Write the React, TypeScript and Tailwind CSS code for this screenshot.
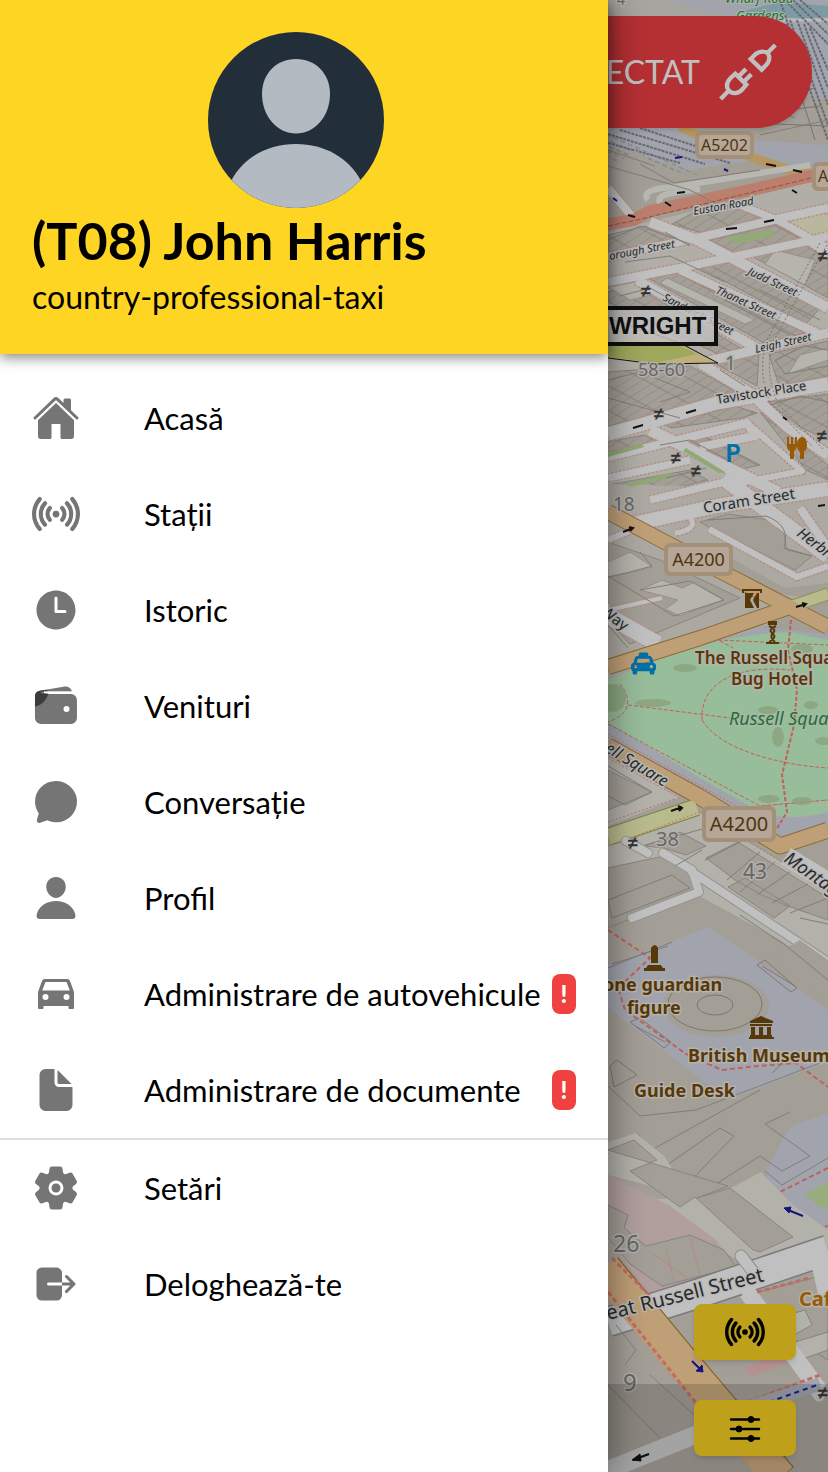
import type { ReactNode } from "react";
import {
  IoHome,
  IoRadio,
  IoTime,
  IoWallet,
  IoChatbubble,
  IoPerson,
  IoDocument,
  IoSettings,
  IoLogOut,
} from "react-icons/io5";
import { FaTaxi } from "react-icons/fa";

function CarIcon() {
  return (
    <svg viewBox="0 -1 48 48" className="size-12" fill="currentColor" aria-hidden="true">
      <path
        fillRule="evenodd"
        d="M13 8H35C36.5 8 37.500 8.800 38 10L42 21V36.500C42 37.500 41.500 38 40.500 38H38C37 38 36.500 37.500 36.500 36.500V35H11.500V36.500C11.500 37.500 11 38 10 38H7.500C6.500 38 6 37.500 6 36.500V21L10 10C10.500 8.800 11.500 8 13 8ZM13.500 11L10.200 19.500H37.800L34.500 11ZM13.500 23A3 3 0 1 0 13.500 29A3 3 0 1 0 13.500 23ZM34.500 23A3 3 0 1 0 34.500 29A3 3 0 1 0 34.500 23Z"
      />
    </svg>
  );
}

function WalletIcon() {
  return (
    <svg viewBox="0 0 48 48" className="size-12" fill="currentColor" aria-hidden="true">
      <IoWallet x={0} y={0} size={48} />
      <path d="M3 24.500V13.500C3 11 5.500 9 8 8.700L15.500 7.700V9.400H10.500C8.500 9.400 8 11.500 10.500 11.500H16.500C14 19 9 23.500 3 24.500Z" fill="#3c3c3c" />
      <path d="M12 10.300H40" stroke="#fff" strokeWidth="1.800" />
    </svg>
  );
}

function SlidersIcon() {
  return (
    <svg viewBox="0 0 40 40" className="size-10" fill="currentColor" stroke="currentColor" aria-hidden="true">
      <path d="M6 11.500H34M6 21H34M6 30.500H34" strokeWidth="2.500" strokeLinecap="round" />
      <circle cx="26" cy="11.500" r="3" />
      <circle cx="14" cy="21" r="3" />
      <circle cx="26" cy="30.500" r="3" />
    </svg>
  );
}

function UnpluggedIcon() {
  return (
    <svg viewBox="6 6 192 192" className="size-16 shrink-0" fill="none" stroke="currentColor" strokeWidth="13" aria-hidden="true">
      <path d="M110 63L143 95L157 80C171 65 168 42 149 41C138 40 131 43 125 48Z" />
      <path d="M158 47L184 21" />
      <path d="M64 107L97 140L85 154C72 169 52 168 44 157C35 145 38 132 50 120Z" />
      <path d="M46 156L20 183M75 114L96 93M91 130L112 109" />
    </svg>
  );
}

function Avatar() {
  return (
    <svg viewBox="0 0 176 176" className="mr-4 size-44 self-center" role="img" aria-label="Avatar">
      <clipPath id="avatar-clip">
        <circle cx="88" cy="88" r="88" />
      </clipPath>
      <g clipPath="url(#avatar-clip)">
        <rect width="176" height="176" fill="#222e3a" />
        <path d="M88 27C108 27 122 42 122 62C122 84 107 101.500 88 101.500C69 101.500 54 84 54 62C54 42 68 27 88 27Z" fill="#b3bac1" />
        <path d="M88 112C117 112 141 126 153 149V176H23V149C35 126 59 112 88 112Z" fill="#b3bac1" />
      </g>
    </svg>
  );
}

const primary: { label: string; icon: ReactNode; alert?: boolean }[] = [
  { label: "Acasă", icon: <IoHome className="size-12" /> },
  { label: "Stații", icon: <IoRadio className="size-12" /> },
  { label: "Istoric", icon: <IoTime className="size-12" /> },
  { label: "Venituri", icon: <WalletIcon /> },
  { label: "Conversație", icon: <IoChatbubble className="size-12" /> },
  { label: "Profil", icon: <IoPerson className="size-12" /> },
  { label: "Administrare de autovehicule", icon: <CarIcon />, alert: true },
  { label: "Administrare de documente", icon: <IoDocument className="size-12" />, alert: true },
];

const secondary: { label: string; icon: ReactNode; alert?: boolean }[] = [
  { label: "Setări", icon: <IoSettings className="size-12" /> },
  { label: "Deloghează-te", icon: <IoLogOut className="size-12" /> },
];

function MenuItem({ label, icon, alert }: { label: string; icon: ReactNode; alert?: boolean }) {
  return (
    <li>
      <a href="#" className="flex h-24 items-center px-8 text-[31px] leading-10 text-black">
        <span className="mr-16 shrink-0 text-[#757575]">{icon}</span>
        <span className="min-w-0 flex-1 whitespace-nowrap">{label}</span>
        {alert && (
          <span className="flex h-10 w-6 shrink-0 items-center justify-center rounded-lg bg-[#f04141] text-2xl font-black text-white">
            !
          </span>
        )}
      </a>
    </li>
  );
}

function Shield({ x, y, w, h, size, children }: { x: number; y: number; w: number; h: number; size: number; children: string }) {
  return (
    <g>
      <rect x={x} y={y} width={w} height={h} rx="6" fill="#a49077" />
      <rect x={x + 4} y={y + 4} width={w - 8} height={h - 8} rx="3" fill="#b5a697" />
      <text x={x + w / 2} y={y + h / 2 + size * 0.36} fontSize={size} fill="#4d3610" textAnchor="middle">
        {children}
      </text>
    </g>
  );
}

const whiteRoads: [string, number][] = [
  ["M608 188L634 219", 8],
  ["M608 257L697 238L777 219L828 208", 8],
  ["M650 222L697 240L828 308", 10],
  ["M740 205L777 220L828 248", 7],
  ["M608 282L680 268L813 240L828 236", 8],
  ["M808 240L828 254", 8],
  ["M680 270L817 333", 8],
  ["M637 280L760 350", 9],
  ["M700 363L760 349L828 333", 9],
  ["M608 434L717 403L828 384", 13],
  ["M700 363L750 393L787 427L828 455", 10],
  ["M650 430L778 492", 11],
  ["M608 457L747 423L755 436L700 447", 8],
  ["M608 478L690 460", 7],
  ["M747 423L802 471L725 486", 6],
  ["M650 500L741 478", 7],
  ["M633 524L717 506L828 489", 14],
  ["M723 478L828 556", 15],
  ["M800 508L828 548", 8],
  ["M608 540L634 529", 6],
  ["M690 518C698 526 686 532 675 533", 5],
  ["M709 529L797 577L828 566", 6],
  ["M608 610L662 598", 4],
  ["M608 616L658 644", 16],
];

const darkLines =
  "M608 166L690 190L720 206M640 164L674 183L760 170M608 150L655 166M735 95L795 118M760 135L828 120M608 240L640 226L690 244M665 232L690 246M625 262L670 256L725 282M620 296L650 288L690 310M640 315L690 345M725 300L790 335M760 290L820 320M608 380L640 372L690 392L660 402M608 398L680 418M720 370L745 386M775 360L805 346L828 350M775 360L785 374L828 366M770 405L800 396L828 402M660 445L690 440L728 460M666 478L706 468M708 520L766 516C790 525 786 540 784 548L812 556M608 577L630 572L652 566L640 552M640 590L690 581L724 600L674 616L608 576M608 625L628 648M608 766L652 792L625 805L608 796M645 845L720 824M675 866L702 850M705 860L740 842M727 880L760 852M740 892L775 862M757 895L790 872M772 903L808 884M790 913L828 898M800 918L828 924M608 900L672 875L690 888L612 918L608 900M740 915L785 945L828 980M608 1086L640 1116L696 1110L828 1060M608 1142L637 1158L760 1090M650 1177L720 1128L734 1136L676 1196L650 1177M697 1196L760 1156L782 1171L810 1156L765 1124L790 1112M765 1171L782 1185L828 1158M637 1133L670 1170";

function MapView() {
  return (
    <svg
      viewBox="608 0 220 1472"
      preserveAspectRatio="xMinYMin slice"
      className="absolute inset-0 size-full font-['Noto_Sans',sans-serif]"
      aria-label="Map"
    >
      <defs>
        <pattern id="terrace" width="9" height="22" patternUnits="userSpaceOnUse" patternTransform="rotate(28) skewX(-30)">
          <rect width="9" height="22" fill="#a39e96" />
          <path d="M0 0V22M0 11H9" stroke="#857f79" strokeWidth="1" />
        </pattern>
        <pattern id="rails" width="8" height="5" patternUnits="userSpaceOnUse" patternTransform="rotate(24)">
          <path d="M0 1H5" stroke="#777881" strokeWidth="1" />
        </pattern>
      </defs>

      <rect x="608" width="220" height="1472" fill="#a39e96" />

      {/* Rail yard */}
      <path d="M608 0H828V174L755 160L690 170L608 146Z" fill="#a2a4ad" />
      <path d="M608 0H670L740 22L608 24Z" fill="#a7a59f" />
      <path d="M740 12L780 2L828 6V17L800 19Z" fill="#7c9ba5" />
      <path d="M608 20H828" stroke="#bcbcbc" strokeWidth="3" />
      <path d="M608 132L700 176L608 160Z" fill="url(#rails)" />
      <path d="M690 128H770L806 95L828 100V145L750 140Z" fill="#a39e96" />
      <g stroke="#696a71" strokeWidth="2" strokeDasharray="3 1" fill="none">
        <path d="M785 0L828 44M793 0L828 34M800 0L828 24M790 20L828 125M797 20L828 105M804 24L828 88M810 28L828 70M786 24L828 140M608 134L705 164M620 130L730 163M640 128L720 154M608 143L680 163M780 0L800 60" />
      </g>
      <path d="M765 100L815 88M770 112L820 106M775 124L828 126M790 60L815 140" stroke="#77736e" fill="none" />
      <path d="M680 127L730 150L790 170L828 178" stroke="#b7965f" strokeWidth="9" fill="none" />
      <path d="M608 172L635 150L690 190L650 205L608 214Z" fill="#a39e96" />

      {/* City blocks */}
      <path d="M608 232L828 178V530L608 500Z" fill="#b0aea7" />
      <g fill="url(#terrace)" stroke="#8a857e" strokeWidth="1">
        <path d="M695 212L735 204L770 217L703 233L672 224Z" />
        <path d="M608 235L645 226L688 241L608 254Z" />
        <path d="M710 240L775 225L808 238L738 254Z" />
        <path d="M690 263L732 257L822 306L806 324Z" />
        <path d="M648 278L676 273L806 333L764 343Z" />
        <path d="M608 292L633 285L744 350L718 354L608 302Z" />
        <path d="M748 254L802 243L828 260V298Z" />
        <path d="M608 372L690 366L740 394L702 403L608 426Z" />
        <path d="M714 363L759 354L757 386Z" />
        <path d="M769 354L828 341V376L779 386Z" />
        <path d="M664 424L735 406L757 413L742 418L671 428Z" />
        <path d="M768 402L828 394V440L800 427Z" />
        <path d="M760 412L828 465V480L806 470Z" />
        <path d="M670 440L706 437L760 465L728 472Z" />
        <path d="M608 442L644 435L658 442L608 452Z" />
        <path d="M608 485L690 470L708 480L644 496Z" />
      </g>
      <path d="M667 278L755 320L745 324L660 283ZM775 250L815 260L805 285L765 264ZM800 355L828 348V360L788 374ZM608 287L635 282L655 294L630 300Z" fill="#b5b4ad" stroke="#96928b" strokeWidth="1" />
      <path d="M785 225L815 212L828 216V240L806 236Z" fill="#b9b79d" />
      <path d="M730 240L728 236L770 230L775 236L737 244Z" fill="#94a878" />

      {/* Bloomsbury blocks */}
      <path d="M608 484L828 490V600L608 690Z" fill="#aca9a2" />
      <path d="M608 542L660 560L740 598L630 644L608 620Z" fill="#a39e96" stroke="#8a857e" />
      <path d="M700 522L728 514L770 520L784 534L787 550L812 556L795 570L707 526Z" fill="#a39e96" stroke="#8a857e" />
      <path d="M707 545L785 588L828 583V600L780 594L700 555Z" fill="#a39e96" />
      <path d="M608 562L630 552L653 567L608 578ZM640 590L662 580L682 588L695 582L724 600L680 616L665 609L678 600Z" fill="#b5b4ad" stroke="#95918a" />

      {/* Streets */}
      <g fill="none" strokeLinejoin="round">
        {whiteRoads.map(([d, w]) => (
          <path key={"edge" + d} d={d} stroke="#b88c86" strokeWidth={w + 3} strokeDasharray="2 2" />
        ))}
        {whiteRoads.map(([d, w]) => (
          <path key={d} d={d} stroke="#c0c0c0" strokeWidth={w} />
        ))}
      </g>
      <path d="M608 452L642 444L644 447L608 457ZM626 484L670 473L674 477L630 487ZM686 448L725 472L719 473L683 451Z" fill="#90a875" />
      <path d="M608 224L634 220L650 211L750 190L828 172" stroke="#bb7f6e" strokeWidth="12" fill="none" />
      <path d="M608 226L637 220L828 174" stroke="#9c4d41" strokeWidth="1" strokeDasharray="5 2" fill="none" />
      <path d="M648 200C640 190 660 188 680 186L810 165M660 203C656 194 670 193 700 189" stroke="#b7b8b2" strokeWidth="6" fill="none" />
      <path d="M820 243L790 297L767 340Q757 370 770 403L813 447M827 245L795 302L773 342Q764 372 778 404L824 450" stroke="#77736e" strokeWidth="1" strokeDasharray="2 2" fill="none" />

      {/* Highlighted zone */}
      <path d="M608 318L680 343L718 363L655 364L608 358Z" fill="#beb078" stroke="#111" strokeWidth="1" />
      <path d="M608 346L670 341L697 354L655 363L608 357Z" fill="#9ea95c" />

      {/* Russell Square */}
      <path d="M608 690L700 648L760 627L828 634V840L780 840L608 736Z" fill="#a2a4ad" />
      <path d="M608 680C670 655 720 634 790 632L828 640V812Q790 822 760 812L700 778L608 722Z" fill="#98bd9b" />
      <g stroke="#c85c58" strokeWidth="1" strokeDasharray="4 2" fill="none">
        <path d="M608 670L718 640L828 645M620 684Q640 710 608 722M628 705L730 718M702 720C700 680 740 665 790 670M702 720C720 750 780 765 828 768M608 724L760 806L828 800M720 641L733 648" />
        <path d="M791 620L788 650L797 690L794 725L782 775L787 812L776 830" strokeWidth="2" />
      </g>
      <g fill="#8da783">
        <ellipse cx="613" cy="698" rx="13" ry="14" />
        <ellipse cx="653" cy="703" rx="18" ry="4" />
        <ellipse cx="685" cy="668" rx="12" ry="4" />
        <ellipse cx="778" cy="737" rx="6" ry="10" />
        <ellipse cx="823" cy="741" rx="8" ry="4" />
        <ellipse cx="811" cy="705" rx="7" ry="4" />
        <ellipse cx="802" cy="649" rx="11" ry="5" />
        <ellipse cx="769" cy="799" rx="11" ry="4" />
        <ellipse cx="802" cy="801" rx="10" ry="4" />
        <ellipse cx="768" cy="710" rx="10" ry="4" />
      </g>

      {/* Blocks south of the square */}
      <path d="M608 755L680 797L608 826ZM700 813L828 890V1010L608 890V845Z" fill="#b2b1aa" />
      <path d="M608 870L670 876L694 893L780 940L828 972V1010L709 940L608 965Z" fill="#a39e96" />
      <path d="M608 770L652 792L608 810ZM645 846L680 832L706 846L686 855L664 848ZM706 858L738 842L828 898V920L785 905L762 895L735 880ZM728 887L745 878L790 906L774 918ZM608 868L664 856L692 872L696 892L608 928Z" fill="#a39e96" stroke="#8a857e" />
      <g fill="none" strokeLinejoin="round">
        <path d="M608 512L720 571L828 627" stroke="#8a6d3a" strokeWidth="16" />
        <path d="M608 667L700 638L787 608" stroke="#8a6d3a" strokeWidth="16" />
        <path d="M787 608L828 594" stroke="#8c9157" strokeWidth="13" />
        <path d="M787 608L828 594" stroke="#b9bb8d" strokeWidth="11" />
        <path d="M608 746L700 797L780 846L828 830" stroke="#8a6d3a" strokeWidth="17" />
        <path d="M608 837L697 807" stroke="#7b8243" strokeWidth="18" />
        <path d="M608 837L697 807" stroke="#b9bb8d" strokeWidth="16" />
        <path d="M608 512L720 571L828 627M608 667L700 638L787 608" stroke="#bf9f76" strokeWidth="14" />
        <path d="M608 746L700 797L780 846L828 830" stroke="#bf9f76" strokeWidth="15" />
        <path d="M786 856L828 882" stroke="#c0c0c0" strokeWidth="19" />
        <path d="M608 758L680 798M608 822L675 799M608 846L700 812L828 890M608 734L740 808L828 800" stroke="#c77069" strokeWidth="1" strokeDasharray="2 2" />
        <path d="M663 853L692 870L699 892L632 918M692 872L780 930L828 962M626 841L648 853" stroke="#939590" strokeWidth="10" strokeLinecap="round" />
        <path d="M663 853L692 870L699 892L632 918M692 872L780 930L828 962M626 841L648 853" stroke="#c0c0c0" strokeWidth="8" strokeLinecap="round" />
      </g>

      {/* British Museum */}
      <path d="M608 965L709 927L828 1010V1062L728 1100L608 1008Z" fill="#a2a4ad" />
      <path d="M755 966L770 960L828 1003V960L800 940Z" fill="#a39e96" />
      <ellipse cx="716" cy="1006" rx="53" ry="31" fill="#a39e96" />
      <path d="M668 1004A47 27 0 1 0 762 1004A47 27 0 1 0 668 1004M697 1005A18 10 0 1 0 733 1005A18 10 0 1 0 697 1005" fill="none" stroke="#7b7670" />
      <path d="M608 930L650 958L618 988L625 1010L686 1054L722 1070L758 1066L796 1063L828 1087" fill="none" stroke="#bd625a" strokeWidth="2" strokeDasharray="5 3" />
      <path d="M608 968L672 942M612 964L668 946M757 965L765 960L797 988L791 992ZM762 966L795 986M630 1022L640 1018L671 1042L664 1048ZM635 1026L665 1042M772 1073L784 1062L810 1053M610 1066L617 1060L637 1075L614 1087Z" fill="none" stroke="#7e7973" />
      <path d="M765 1172L790 1127L828 1113V1250L782 1215Z" fill="#a2a4ad" />
      <path d="M804 1194L828 1182V1208L820 1207Z" fill="#98ac7e" />
      <path d="M828 1168L770 1197L820 1227L828 1226" fill="none" stroke="#bd625a" strokeWidth="2" strokeDasharray="5 3" />
      <path d={darkLines} fill="none" stroke="#827d77" strokeWidth="1" />
      <path d="M608 1142L636 1133L664 1156L690 1196L608 1175ZM733 1187L761 1172L793 1205L828 1230V1262L750 1268L640 1200L700 1197Z" fill="#b2b1aa" />
      <path d="M608 1150L634 1140L657 1160L630 1171L680 1207L695 1197L753 1250L760 1252L793 1237L730 1188L697 1198L728 1186Z" fill="#a39e96" stroke="#8a857e" />

      {/* Great Russell Street */}
      <path d="M608 1175L670 1206L716 1240L737 1270L652 1296L608 1240Z" fill="#b19f9e" />
      <path d="M608 1205L628 1215L624 1228L646 1246L690 1235L724 1250L736 1267L662 1286L630 1264L608 1238Z" fill="#a39e96" stroke="#88827d" />
      <path d="M650 1252L690 1280M666 1250L675 1284M690 1238L700 1276" stroke="#b58a88" fill="none" />
      <path d="M608 1325L700 1297L745 1340V1472H608Z" fill="#a39e96" />
      <path d="M755 1293L828 1274V1360L795 1340Z" fill="#a39e96" stroke="#88827d" />
      <path d="M770 1320L805 1310L812 1325L785 1340M785 1345L828 1332V1350L800 1360Z" fill="#b2b1aa" stroke="#88827d" />
      <path d="M743 1368L790 1350L800 1358L752 1376Z" fill="#b5908f" />
      <g fill="none">
        <path d="M608 1322L700 1293L828 1250" stroke="#7a7b7c" strokeWidth="31" />
        <path d="M608 1322L700 1293L828 1250" stroke="#c0c0c0" strokeWidth="28" />
        <path d="M741 1256L755 1274" stroke="#8d8e8f" strokeWidth="13" strokeLinecap="round" />
        <path d="M741 1256L757 1277M747 1292L819 1396" stroke="#c0c0c0" strokeWidth="11" strokeLinecap="round" />
        <path d="M747 1292L819 1390M819 1260L828 1300" stroke="#c0c0c0" strokeWidth="17" />
        <path d="M608 1470L700 1433" stroke="#c0c0c0" strokeWidth="18" />
        <path d="M605 1268L680 1359L781 1478" stroke="#806427" strokeWidth="34" />
        <path d="M604 1268L680 1360L780 1478" stroke="#bf9f76" strokeWidth="33" />
        <path d="M608 1292L700 1408M612 1258L650 1296M740 1405L820 1375M757 1292L810 1278" stroke="#c06b64" strokeWidth="3" strokeDasharray="5 3" />
        <path d="M608 1385L660 1438M616 1325L636 1350L625 1365M650 1375L700 1420" stroke="#897d7b" />
        <path d="M735 1412L820 1384" stroke="#a2a4ad" strokeWidth="13" />
        <path d="M735 1414L820 1384" stroke="#1c1c98" strokeWidth="2" strokeDasharray="5 4" />
      </g>

      {/* One-way arrows */}
      <g fill="none" strokeWidth="2" stroke="#111">
        <path d="M623 532L633 528M629 527L633 528L630 531M796 607L806 604M802 603L806 604L803 607M671 811L682 807M678 806L682 808L679 811M726 229L737 228M764 222L774 220M665 202L671 206M677 193L685 192M628 215L635 217M766 164L776 166M793 170L802 172M792 190L797 193M686 413L696 410M633 428L643 425M783 417L787 420M818 506L825 505" />
        <path d="M649 1454L633 1460" />
        <path d="M640 1454L632 1460L641 1461Z" fill="#111" strokeWidth="1" />
        <g stroke="#15157d">
          <path d="M692 1361L700 1369M803 1216L788 1210M613 198L617 201M724 169L728 171M675 158L682 157" />
          <path d="M702 1365L703 1372L696 1371ZM791 1207L784 1208L789 1213Z" fill="#15157d" strokeWidth="1" />
        </g>
      </g>

      {/* Street labels */}
      <g fill="#292929" stroke="#b9b9b9" strokeWidth="3" paintOrder="stroke" strokeLinejoin="round">
        <g fontSize="11" fontStyle="italic">
          <text transform="translate(694 215) rotate(-10)">Euston Road</text>
          <text transform="translate(610 260) rotate(-11)">orough Street</text>
          <text transform="translate(747 274) rotate(25)">Judd Street</text>
          <text transform="translate(715 293) rotate(24)">Thanet Street</text>
          <text transform="translate(662 300) rotate(27)">Sandwich Street</text>
          <text transform="translate(756 353) rotate(-13)">Leigh Street</text>
        </g>
        <text fontSize="13" transform="translate(717 404) rotate(-9)">Tavistock Place</text>
        <text fontSize="15" transform="translate(704 513) rotate(-9)">Coram Street</text>
        <text fontSize="15" fontStyle="italic" transform="translate(796 535) rotate(37)">Herbrand</text>
        <text fontSize="15" transform="translate(600 613) rotate(38)">Way</text>
        <text fontSize="16" fontStyle="italic" transform="translate(604 751) rotate(31)">ell Square</text>
        <text fontSize="18" fontStyle="italic" transform="translate(783 861) rotate(35)">Montague</text>
        <text fontSize="20" transform="translate(608 1320) rotate(-14)">eat Russell Street</text>
      </g>

      <g fill="#666" stroke="#b3b0ab" strokeWidth="3" paintOrder="stroke">
        <text x="638" y="376" fontSize="18">58-60</text>
        <text x="725" y="370" fontSize="19">1</text>
        <text x="613" y="511" fontSize="19">18</text>
        <text x="656" y="846" fontSize="20">38</text>
        <text x="743" y="879" fontSize="21">43</text>
        <text x="613" y="1252" fontSize="23">26</text>
        <text x="623" y="1391" fontSize="24">9</text>
        <text x="617" y="5" fontSize="14">4</text>
      </g>
      <g fill="#333" fontSize="18" fontWeight="700" fontFamily="Liberation Sans">
        <text x="641" y="297">≠</text>
        <text x="654" y="420">≠</text>
        <text x="671" y="464">≠</text>
        <text x="691" y="477">≠</text>
        <text x="818" y="262">≠</text>
        <text x="817" y="442">≠</text>
        <text x="628" y="849">≠</text>
        <text x="818" y="1399">≠</text>
      </g>

      <Shield x={695} y={131} w={59} h={28} size={16}>A5202</Shield>
      <Shield x={812} y={162} w={59} h={29} size={16}>A5202</Shield>
      <Shield x={664} y={543} w={69} h={33} size={18}>A4200</Shield>
      <Shield x={702} y={806} w={74} h={36} size={20}>A4200</Shield>

      {/* Points of interest */}
      <g fill="#573808" stroke="#b6b3ad" strokeWidth="3" paintOrder="stroke" strokeLinejoin="round" fontWeight="600" fontSize="17">
        <text x="695" y="664">The Russell Square</text>
        <text x="731" y="685">Bug Hotel</text>
        <g fontSize="18" fontWeight="700">
          <text x="603" y="991">one guardian</text>
          <text x="627" y="1014">figure</text>
          <text x="688" y="1062">British Museum</text>
          <text x="634" y="1097">Guide Desk</text>
        </g>
        <text x="799" y="1306" fontSize="20" fontWeight="700" fill="#985a05">Cafe</text>
      </g>
      <g fill="#286b35" stroke="#a9b9aa" strokeWidth="2" paintOrder="stroke" fontStyle="italic">
        <text x="729" y="725" fontSize="18">Russell Square</text>
        <text x="725" y="3" fontSize="13">Wharf Road</text>
        <text x="736" y="20" fontSize="13">Gardens</text>
      </g>
      <text x="725" y="462" fontSize="26" fill="#0070a8" fontWeight="600">P</text>
      <FaTaxi x={631} y={651} size={25} color="#0070a8" />
      <g fill="#985a05">
        <path d="M787 437H789V444H791V437H793V444H795V437H797V446Q796 450 794 451V459H790V451Q787 450 787 446Z" />
        <path d="M802 437C806 437 807 441 807 445Q807 450 804 452V459H800V452Q797 450 797 445C797 441 799 437 802 437Z" />
      </g>
      <g fill="#573808">
        <path d="M742 589H762V593H760V591H744V593H742ZM745 593H754L750 600L754 608H745ZM757 593H759V608H757L753 600Z" />
        <path d="M768 621H777V625H768ZM766 642H779V644H766Z" />
        <path d="M769 626Q777 629 773 633Q769 637 775 642M776 626Q768 629 772 633Q778 637 769 642" fill="none" stroke="#573808" strokeWidth="2" />
        <path d="M651 948Q655 942 658 948V963H651ZM648 965H661L663 968H665V971H644V968H646Z" />
        <path d="M761 1016L773 1021V1023H750V1021ZM750 1024H772V1026H750ZM751 1027H755V1035H751ZM759 1027H763V1035H759ZM767 1027H771V1035H767ZM750 1035H772V1037H774V1039H749V1037H750Z" />
      </g>
    </svg>
  );
}

export default function App() {
  return (
    <div className="flex min-h-screen overflow-hidden bg-white font-[Lato,'Noto_Sans',sans-serif]">
      <aside className="relative z-10 flex w-[608px] shrink-0 flex-col bg-white shadow-[4px_0_32px_rgba(0,0,0,0.4)]">
        <header className="flex flex-col bg-[#ffd524] px-8 pt-8 pb-8 shadow-[0_4px_12px_rgba(0,0,0,0.45)]">
          <Avatar />
          <h1 className="text-[52px] leading-16 font-bold text-black">(T08) John Harris</h1>
          <p className="pt-1 pb-1 text-[32px] leading-[42px] text-black">country-professional-taxi</p>
        </header>
        <nav className="pt-4" aria-label="Meniu">
          <ul className="border-b-2 border-[#dedede]">
            {primary.map((item) => (
              <MenuItem key={item.label} {...item} />
            ))}
          </ul>
          <ul>
            {secondary.map((item) => (
              <MenuItem key={item.label} {...item} />
            ))}
          </ul>
        </nav>
      </aside>

      <main className="relative flex min-w-0 flex-1 flex-col overflow-hidden">
        <MapView />
        <div className="relative flex pt-4 pr-4">
          <button
            type="button"
            className="flex h-28 min-w-0 flex-1 items-center justify-end gap-4 rounded-r-full bg-[#b53033] pr-8 text-[32px] text-[#c0c0c0] shadow-md"
          >
            <span>ECTAT</span>
            <UnpluggedIcon />
          </button>
        </div>
        <div className="absolute top-[306px] left-0 flex h-10 items-center border-4 border-l-0 border-[#101010] bg-[#c0c0c0]/85 pr-2 pl-px font-['Liberation_Sans',sans-serif] text-2xl font-bold text-[#101010]">
          WRIGHT
        </div>
        <div className="relative mt-auto flex justify-end pr-8 pb-6">
          <button
            type="button"
            aria-label="Stații"
            className="flex h-14 w-[102px] items-center justify-center rounded-lg bg-[#bfa01b] text-black shadow-md"
          >
            <IoRadio className="size-10" />
          </button>
        </div>
        <footer className="relative flex justify-end bg-black/15 px-8 py-4">
          <button
            type="button"
            aria-label="Opțiuni"
            className="flex h-14 w-[102px] items-center justify-center rounded-lg bg-[#bfa01b] text-black shadow-md"
          >
            <SlidersIcon />
          </button>
        </footer>
      </main>
    </div>
  );
}
